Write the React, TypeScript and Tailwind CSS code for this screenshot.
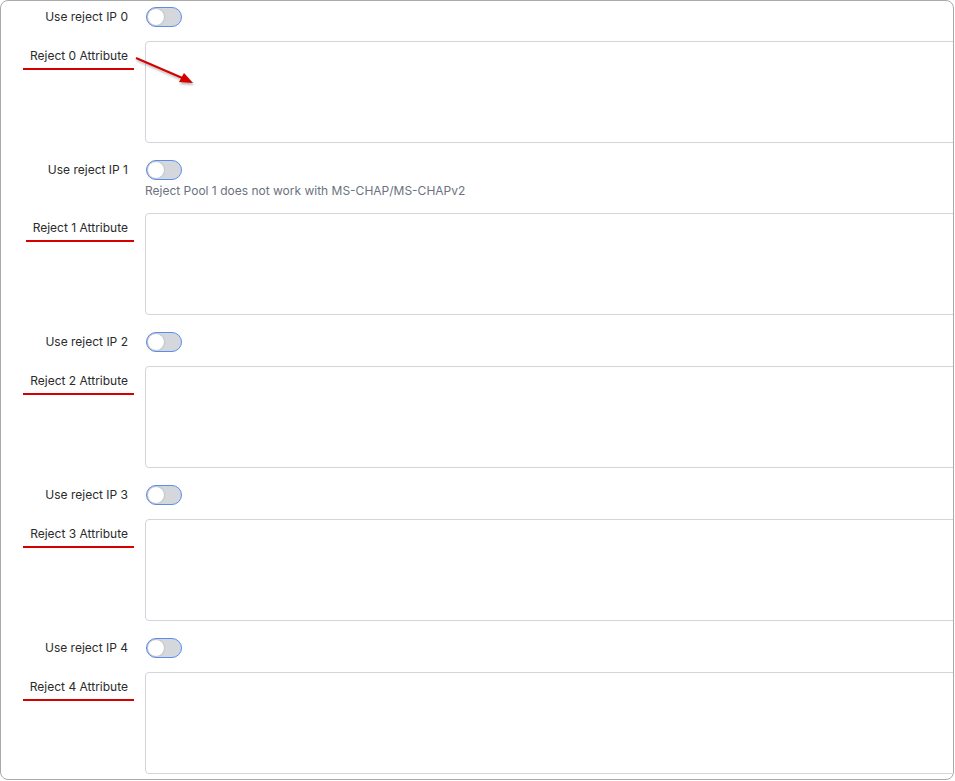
import React from 'react'

interface RejectRow {
  index: number
  note?: string
}

const rows: RejectRow[] = [
  { index: 0 },
  { index: 1, note: 'Reject Pool 1 does not work with MS-CHAP/MS-CHAPv2' },
  { index: 2 },
  { index: 3 },
  { index: 4 },
]

function Toggle() {
  return (
    <div className="w-[36px] h-[20px] rounded-full border-[1.5px] border-[#5b8def] bg-[#d4d7dc] flex items-center px-[1px]">
      <div className="w-[16px] h-[16px] rounded-full bg-white shadow-[0_0_2px_rgba(0,0,0,0.25)]" />
    </div>
  )
}

function Row({ row }: { row: RejectRow }) {
  return (
    <div className="mb-[17px]">
      <div className="flex items-center h-[20px]">
        <div className="w-[127px] shrink-0 text-right text-[12px] leading-[16px] text-[#2b2b2b]">Use reject IP {row.index}</div>
        <div className="ml-[18px]">
          <Toggle />
        </div>
      </div>
      {row.note && (
        <div className="ml-[144px] mt-[3px] text-[12px] leading-[16px] text-[#6b7280]">{row.note}</div>
      )}
      <div className="flex mt-[14px]">
        <div className="w-[127px] shrink-0 pt-[7px] text-right text-[12px] leading-[16px] text-[#2b2b2b]">
          <span className="relative">
            Reject {row.index} Attribute
            <span className="absolute left-[-7px] right-[-6px] top-[20px] h-[2px] bg-[#d60000]" />
          </span>
        </div>
        <textarea className="ml-[17px] w-[830px] h-[102px] shrink-0 rounded border border-[#d1d5db] bg-white resize-none outline-none" />
      </div>
    </div>
  )
}

export default function App() {
  return (
    <div className="w-[955px] h-[781px] bg-white" style={{ fontFamily: 'Inter, "Noto Sans", sans-serif' }}>
      <div className="relative w-[954px] h-[780px] border border-[#a9a9a9] rounded-lg overflow-hidden pt-[6px]">
        {rows.map((row) => (
          <Row key={row.index} row={row} />
        ))}
        <svg className="absolute left-[130px] top-[50px]" width="70" height="40" viewBox="0 0 70 40">
          <defs>
            <filter id="sh" x="-20%" y="-20%" width="140%" height="160%">
              <feDropShadow dx="1" dy="2" stdDeviation="1.2" floodColor="#000" floodOpacity="0.3" />
            </filter>
          </defs>
          <g filter="url(#sh)">
            <line x1="5" y1="7" x2="56" y2="29" stroke="#d40000" strokeWidth="2" />
            <polygon points="62,32 48,31 53,22" fill="#d40000" />
          </g>
        </svg>
      </div>
    </div>
  )
}
